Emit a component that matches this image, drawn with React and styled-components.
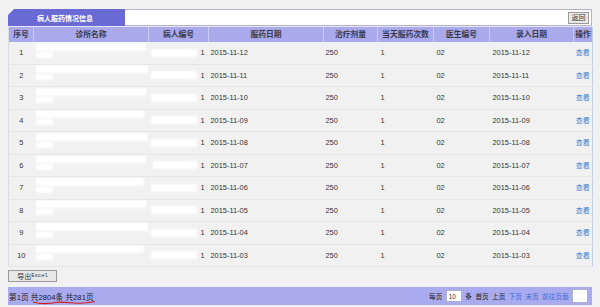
import React from "react";
import styled, { createGlobalStyle } from "styled-components";

const GlobalStyle = createGlobalStyle`
  html, body { margin: 0; padding: 0; background: #f1f1f1; }
  body { font-family: "Liberation Sans", "Noto Sans CJK SC", sans-serif; color: #333; }
`;

const Page = styled.div`
  width: 584px;
  padding: 9px 8px 0 8px;
`;

const TabBar = styled.div`
  display: flex;
  height: 17px;
  border-bottom: 1px solid #e6e6f6;
`;

const Tab = styled.div`
  width: 88px;
  padding-left: 29px;
  background: #6a6ad4;
  clip-path: polygon(6px 0, 100% 0, 100% 100%, 0 100%, 0 6px);
  color: #fff;
  font-size: 7px;
  font-weight: bold;
  display: flex;
  align-items: center;
`;

const TabFill = styled.div`
  flex: 1;
  background: #fff;
  border: 1px solid #b4b4c4;
  border-left: none;
  display: flex;
  justify-content: flex-end;
  align-items: center;
  padding-right: 2px;
`;

const SmallButton = styled.button`
  font-family: inherit;
  font-size: 7px;
  line-height: 1;
  color: #333;
  background: #e8e8e8;
  border: 1px solid #9a9a9a;
  height: ${(p) => p.$h || 12}px;
  width: ${(p) => p.$w || 20}px;
  padding: 0;
  margin: 0;
  display: flex;
  align-items: center;
  justify-content: center;
`;

const Table = styled.table`
  width: 584px;
  border-collapse: collapse;
  table-layout: fixed;
  border-left: 1px solid #dcdce4;
  border-right: 1px solid #c6d0e2;
`;

const Th = styled.th`
  height: 15px;
  padding: 0;
  line-height: 1;
  background: #a9a9ec;
  border-left: 1px solid #cacaf2;
  font-size: 7.8px;
  font-weight: bold;
  color: #3a3a4a;
  text-align: center;
  &:first-child { border-left: none; }
`;

const Td = styled.td`
  height: 21.5px;
  padding: 0 0 0 ${(p) => p.$pl ?? 3}px;
  line-height: 1;
  border-bottom: 1px solid #e6e6e6;
  font-size: 7.4px;
  color: #333;
  text-align: ${(p) => p.$align || "left"};
  vertical-align: middle;
  white-space: nowrap;
  overflow: hidden;
`;

const ClinicCell = styled.div`
  display: flex;
  flex-direction: column;
  gap: 1px;
  height: 20px;
  justify-content: flex-start;
`;

const Redacted = styled.span`
  display: block;
  background: #fff;
  width: ${(p) => p.$w}px;
  height: ${(p) => p.$h}px;
  filter: blur(0.8px);
`;

const PatientCell = styled.div`
  display: flex;
  align-items: center;
  justify-content: flex-end;
  gap: 3px;
  padding-right: 4px;
`;

const Link = styled.span`
  color: #3d7fd0;
  font-size: 7px;
`;

const ExportRow = styled.div`
  padding-top: 3px;
  height: 17px;
`;

const ExcelSmall = styled.span`
  font-family: "Liberation Mono", monospace;
  font-size: 5.5px;
`;

const Footer = styled.div`
  position: relative;
  height: 18px;
  background: #aaaaee;
  display: flex;
  justify-content: space-between;
  align-items: center;
  padding: 0 4px 0 1px;
`;

const FooterInfo = styled.span`
  font-size: 7.7px;
  color: #222;
  white-space: pre;
`;

const Squiggle = styled.svg`
  position: absolute;
  left: 24px;
  top: 13px;
`;

const Pager = styled.div`
  display: flex;
  align-items: center;
  gap: 3.5px;
  font-size: 6.6px;
  color: #222;
`;

const PagerLink = styled.span`
  color: ${(p) => (p.$active ? "#3a6fd8" : "#222")};
`;

const PageInput = styled.span`
  display: inline-flex;
  align-items: center;
  padding-left: 2px;
  box-sizing: border-box;
  width: ${(p) => p.$w}px;
  height: ${(p) => p.$h}px;
  background: #fff;
  border: 1px solid #b0b0c8;
  font-size: 6.4px;
  color: #333;
`;

const dates = ["12", "11", "10", "09", "08", "07", "06", "05", "04", "03"];
const clinicWidths = [110, 112, 110, 108, 112, 110, 108, 110, 112, 108];
const patientWidths = [50, 50, 48, 50, 50, 44, 50, 48, 50, 50];

const cols = [25, 115, 60, 115, 54, 56, 56, 84, 19];
const headers = ["序号", "诊所名称", "病人编号", "服药日期", "治疗剂量", "当天服药次数", "医生编号", "录入日期", "操作"];

export default function App() {
  return (
    <>
      <GlobalStyle />
      <Page>
        <TabBar>
          <Tab>病人服药情况信息</Tab>
          <TabFill>
            <SmallButton $w={21} $h={12}>返回</SmallButton>
          </TabFill>
        </TabBar>
        <Table>
          <colgroup>
            {cols.map((w, i) => (
              <col key={i} style={{ width: w }} />
            ))}
          </colgroup>
          <thead>
            <tr>
              {headers.map((h) => (
                <Th key={h}>{h}</Th>
              ))}
            </tr>
          </thead>
          <tbody>
            {dates.map((d, i) => (
              <tr key={d}>
                <Td $align="center" $pl={0}>{i + 1}</Td>
                <Td $pl={2}>
                  <ClinicCell>
                    <Redacted $w={clinicWidths[i]} $h={8} />
                    <Redacted $w={17} $h={6} />
                  </ClinicCell>
                </Td>
                <Td $pl={2}>
                  <PatientCell>
                    <Redacted $w={patientWidths[i]} $h={8} />
                    <span>1</span>
                  </PatientCell>
                </Td>
                <Td $pl={2}>2015-11-{d}</Td>
                <Td $pl={2}>250</Td>
                <Td $pl={3}>1</Td>
                <Td $pl={3}>02</Td>
                <Td $pl={3}>2015-11-{d}</Td>
                <Td $align="center" $pl={0}>
                  <Link>查看</Link>
                </Td>
              </tr>
            ))}
          </tbody>
        </Table>
        <ExportRow>
          <SmallButton $w={49} $h={12}>
            导出<ExcelSmall>Excel</ExcelSmall>
          </SmallButton>
        </ExportRow>
        <Footer>
          <FooterInfo>第1页 共2804条 共281页</FooterInfo>
          <Squiggle width="64" height="5" viewBox="0 0 64 5">
            <path d="M1 2 C 8 4, 16 4, 24 2.5 C 30 1.5, 34 2.5, 38 2.8 C 46 3.5, 56 3, 63 1.5" stroke="#d01818" strokeWidth="1.1" fill="none" />
          </Squiggle>
          <Pager>
            <span>每页</span>
            <PageInput $w={16} $h={12}>10</PageInput>
            <span>条</span>
            <PagerLink>首页</PagerLink>
            <PagerLink>上页</PagerLink>
            <PagerLink $active>下页</PagerLink>
            <PagerLink $active>末页</PagerLink>
            <PagerLink $active>前往页面</PagerLink>
            <PageInput $w={16} $h={14} />
          </Pager>
        </Footer>
      </Page>
    </>
  );
}
